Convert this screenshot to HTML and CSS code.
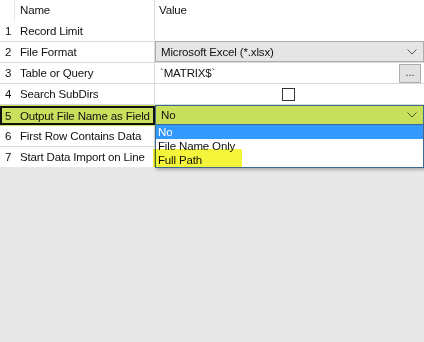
FILE: index.html
```html
<!DOCTYPE html>
<html lang="en">
<head>
    <meta charset="UTF-8">
    <title>Input Properties</title>
    <link rel="stylesheet" href="styles.css">
</head>
<body>
    <div class="grid">
        <div class="row head">
            <div class="num"></div>
            <div class="name">Name</div>
            <div class="value">Value</div>
        </div>
        <div class="row">
            <div class="num">1</div>
            <div class="name">Record Limit</div>
            <div class="value"></div>
        </div>
        <div class="row">
            <div class="num">2</div>
            <div class="name">File Format</div>
            <div class="value">
                <div class="combo">
                    <span>Microsoft Excel (*.xlsx)</span>
                    <svg class="chev" width="10" height="6" viewBox="0 0 10 6"><path d="M0.5 0.5 L5 5 L9.5 0.5" fill="none" stroke="#555" stroke-width="1"/></svg>
                </div>
            </div>
        </div>
        <div class="row">
            <div class="num">3</div>
            <div class="name">Table or Query</div>
            <div class="value text">
                <span>`MATRIX$`</span>
                <button class="dots">...</button>
            </div>
        </div>
        <div class="row">
            <div class="num">4</div>
            <div class="name">Search SubDirs</div>
            <div class="value check"><span class="box"></span></div>
        </div>
        <div class="row active">
            <div class="sel">
                <div class="num">5</div>
                <div class="name">Output File Name as Field</div>
            </div>
            <div class="value">
                <div class="combo open">
                    <span>No</span>
                    <svg class="chev" width="10" height="6" viewBox="0 0 10 6"><path d="M0.5 0.5 L5 5 L9.5 0.5" fill="none" stroke="#4a5a20" stroke-width="1"/></svg>
                </div>
                <ul class="list">
                    <li class="on">No</li>
                    <li>File Name Only</li>
                    <li>Full Path</li>
                </ul>
                <span class="marker"></span>
            </div>
        </div>
        <div class="row">
            <div class="num">6</div>
            <div class="name">First Row Contains Data</div>
            <div class="value"></div>
        </div>
        <div class="row">
            <div class="num">7</div>
            <div class="name">Start Data Import on Line</div>
            <div class="value"></div>
        </div>
    </div>
</body>
</html>
```

FILE: styles.css
```css
* { box-sizing: border-box; margin: 0; padding: 0; }
body {
    background: #e8e8e8; font-family: "Liberation Sans", Arial, sans-serif; font-size: 11.5px; letter-spacing: -0.15px;
    color: #111; width: 424px; height: 342px; overflow: hidden;
}
.grid { background: #ffffff; width: 424px; }
.row { display: flex; height: 21px; border-bottom: 1px solid #dadada; }
.row.head { border-bottom: none; }
.row:last-child { border-bottom: none; height: 20px; }
.num { width: 20px; padding-left: 5px; line-height: 20px; }
.head .num { border-right: 1px solid #e6e6e6; width: 15px; margin-right: 5px; }
.name { width: 135px; line-height: 20px; border-right: 1px solid #dadada; white-space: nowrap; }
.value { flex: 1; position: relative; line-height: 20px; padding-left: 4px; }
.text { display: flex; justify-content: space-between; align-items: center; padding-left: 5px; padding-right: 3px; }
.dots {
    width: 22px; height: 19px; background: #e1e1e1; border: 1px solid #adadad; font: inherit; font-size: 11px;
    color: #333; line-height: 14px; padding-bottom: 4px;
}
.check { display: flex; align-items: center; justify-content: center; padding: 0; }
.box { width: 13px; height: 13px; border: 1px solid #333; background: #fff; margin-left: -3px; margin-top: 1px; }
.combo {
    display: flex; justify-content: space-between; align-items: center; height: 21px; margin-left: -4px;
    background: #e5e5e5; border: 1px solid #adadad; padding: 0 6px 0 5px; margin-top: -1px;
}
.chev { flex-shrink: 0; }
.active { background: #c8e05c; border-bottom: none; }
.sel { display: flex; border: 2px solid #111; width: 155px; height: 19px; margin-top: 1px; }
.sel .num { width: 18px; padding-left: 3px; line-height: 16px; }
.sel .name { border-right: none; line-height: 16px; width: 133px; }
.combo.open {
    background: #c8e05c; border: 1px solid #3c6a8e; height: 20px; margin-left: -4px; margin-top: 0;
}
.list {
    list-style: none; position: absolute; left: 0; right: 0; top: 19px; background: #fff;
    border: 1px solid #3c6a8e; box-shadow: 1px 2px 3px rgba(0, 0, 0, 0.25); z-index: 2;
}
.list li { height: 14px; line-height: 14px; padding-left: 2px; }
.list li.on { background: #3399ff; color: #fff; }
.marker {
    position: absolute; left: -2px; top: 44px; width: 89px; height: 18px; background: #f4f53a;
    mix-blend-mode: multiply; z-index: 3;
}
```
